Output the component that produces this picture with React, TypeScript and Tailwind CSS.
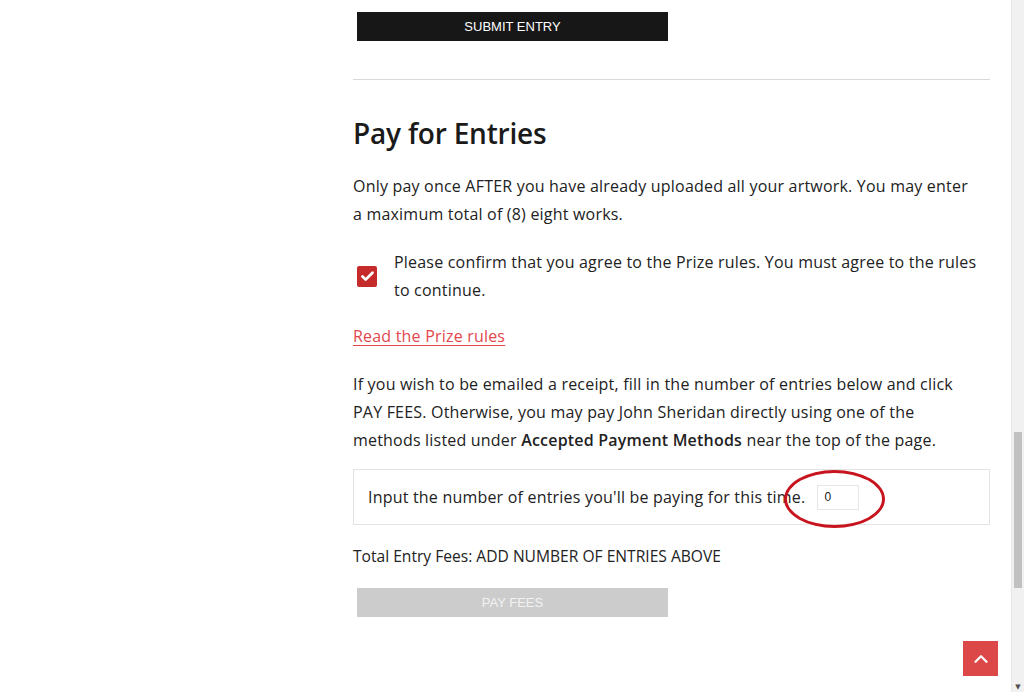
import { ChevronUp, Check } from 'lucide-react'

const font = { fontFamily: '"Open Sans", "DejaVu Sans", sans-serif' }

export default function App() {
  return (
    <div className="relative flex h-[692px] w-[1024px] overflow-hidden bg-white text-[#222]" style={font}>
      <main className="flex-1 pl-[353px] pr-[21px]">
        <button className="ml-[4px] mt-[12px] flex h-[29px] w-[311px] items-center justify-center bg-[#171717] text-[13px] text-white [font-family:'Liberation_Sans',Arial,sans-serif]">
          SUBMIT ENTRY
        </button>

        <hr className="mt-[38px] border-t border-[#d9d9d9]" />

        <h2 className="mt-[34px] text-[28px] font-semibold leading-[38px] tracking-[-0.2px] text-[#1a1a1a]">Pay for Entries</h2>

        <p className="mt-[20px] w-[628px] text-[16px] leading-[28px] tracking-[0.2px]">
          Only pay once AFTER you have already uploaded all your artwork. You may enter a maximum total of (8) eight works.
        </p>

        {/* agreement checkbox */}
        <label className="mt-[20px] flex items-center gap-[17px]">
          <span className="ml-[4px] flex h-[21px] w-[20px] shrink-0 items-center justify-center rounded-[2px] bg-[#c62b2b]">
            <Check className="h-[15px] w-[15px] text-white" strokeWidth={4.5} />
          </span>
          <span className="text-[16px] leading-[28px] tracking-[0.2px]">
            Please confirm that you agree to the Prize rules. You must agree to the rules to continue.
          </span>
        </label>

        <a href="#" className="mt-[18px] inline-block text-[16px] leading-[28px] tracking-[0.2px] text-[#e3474d] underline underline-offset-[3px]">
          Read the Prize rules
        </a>

        <p className="mt-[20px] w-[628px] text-[16px] leading-[28px] tracking-[0.2px]">
          If you wish to be emailed a receipt, fill in the number of entries below and click PAY FEES. Otherwise, you may pay John Sheridan directly using one of the methods listed under{' '}
          <strong className="font-semibold">Accepted Payment Methods</strong> near the top of the page.
        </p>

        <div className="relative mt-[15px] flex h-[56px] items-center border border-[#e3e3e3] pl-[14px]">
          <span className="text-[16px] tracking-[0.2px]">Input the number of entries you'll be paying for this time.</span>
          <input
            defaultValue="0"
            className="ml-[12px] h-[25px] w-[42px] border border-[#e6e6e6] px-[6px] text-[12px] outline-none [font-family:'Liberation_Sans',Arial,sans-serif]"
          />
          {/* red annotation ring */}
          <div className="pointer-events-none absolute left-[430px] top-[0px] h-[58px] w-[101px] rounded-[50%] border-[3px] border-[#c8141e]" />
        </div>

        <p className="mt-[17px] text-[15.6px] leading-[28px]">Total Entry Fees: ADD NUMBER OF ENTRIES ABOVE</p>

        <button
          disabled
          className="ml-[4px] mt-[18px] flex h-[29px] w-[311px] items-center justify-center bg-[#cccccc] text-[13px] text-[#f2f2f2] [font-family:'Liberation_Sans',Arial,sans-serif]"
        >
          PAY FEES
        </button>
      </main>

      {/* page scrollbar */}
      <div className="flex w-[13px] flex-col border-l border-[#e8e8e8] bg-[#f1f1f1]">
        <div className="mx-[2px] mt-[432px] h-[156px] bg-[#c1c1c1]" />
        <div className="mb-[2px] mt-auto flex justify-center text-[7px] leading-none text-[#505050]">▼</div>
      </div>

      <button className="absolute left-[963px] top-[641px] flex h-[35px] w-[35px] items-center justify-center bg-[#dc4848]">
        <ChevronUp className="h-[22px] w-[22px] text-white" strokeWidth={2.5} />
      </button>
    </div>
  )
}
